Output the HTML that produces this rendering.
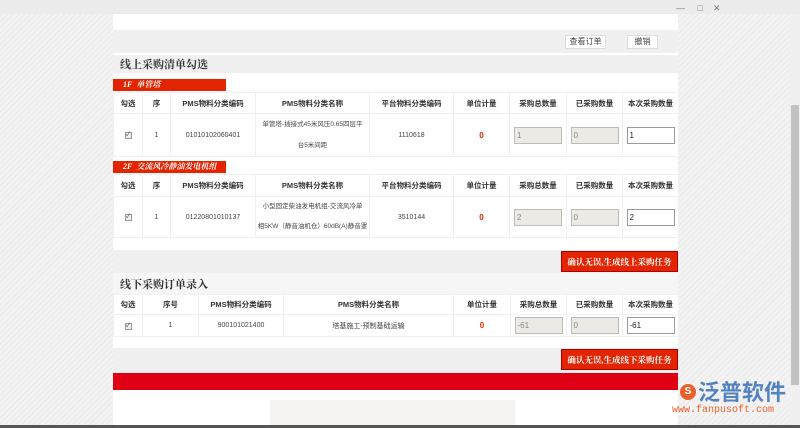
<!DOCTYPE html>
<html><head><meta charset="utf-8"><style>
*{margin:0;padding:0;box-sizing:border-box}
body{width:800px;height:428px;overflow:hidden;position:relative;font-family:"Liberation Serif","Noto Serif CJK SC",serif;font-size:8px;color:#333;
background:repeating-linear-gradient(135deg,#f3f3f3 0 3px,#e9e9e9 3px 4px)}
.a{position:absolute}
.topbar{left:0;top:0;width:800px;height:14px;background:#ececec}
.panel{left:113px;top:14px;width:565px;height:411px;background:#fff}
.gray{background:#f0f0f0}
.btn{background:#fff;border:1px solid #ddd;font-size:8px;text-align:center;line-height:12px;color:#444;font-family:"Liberation Sans","Noto Sans CJK SC",sans-serif}
.title{font-size:11px;font-weight:bold;color:#333}
.lbl{background:#e32400;color:#fff;font-style:italic;font-weight:bold;font-size:8px;line-height:12px;padding-left:10px}
table{position:absolute;left:113px;border-collapse:collapse;background:#fff;table-layout:fixed}
td{border:1px solid #f0f0f0;text-align:center;font-size:7px;color:#444;font-family:"Liberation Sans","Noto Sans CJK SC",sans-serif;overflow:hidden}
tr.h td{font-weight:bold;font-size:7.5px;color:#333}
.nm{white-space:nowrap;font-size:6.5px;line-height:21px}
.z{color:#e32400;font-weight:bold;font-size:8px}
.inp{display:inline-block;width:48px;height:17px;border:1px solid #bbb;background:#ebeae4;text-align:left;padding-left:2px;line-height:15px;font-size:8px;color:#888}
.inp.w{background:#fff;color:#222;border-color:#999}
.cb{display:inline-block;width:7px;height:7px;border:1px solid #999;background:#eee;font-size:6px;line-height:5px}
.rb{background:#e32400;color:#fff;font-weight:bold;font-size:8.5px;text-align:center;line-height:21px;border:1px solid #a00;font-family:"Liberation Serif","Noto Serif CJK SC",serif}
</style></head><body>
<div class="a topbar"></div>
<div class="a" style="left:676px;top:3px;font-size:9px;color:#777;font-family:'Liberation Sans',sans-serif">—&nbsp;&nbsp;&nbsp;&nbsp;&nbsp;□&nbsp;&nbsp;&nbsp;&nbsp;✕</div>
<div class="a" style="left:789px;top:14px;width:11px;height:411px;background:#f0f0f0"></div>
<div class="a" style="left:791px;top:105px;width:8px;height:280px;background:#c2c2c2"></div>
<div class="a panel"></div>
<div class="a gray" style="left:113px;top:30px;width:565px;height:23px"></div>
<div class="a btn" style="left:565px;top:35px;width:41px;height:14px">查看订单</div>
<div class="a btn" style="left:627px;top:35px;width:31px;height:14px">撤销</div>
<div class="a gray" style="left:113px;top:55px;width:565px;height:18px"></div>
<div class="a title" style="left:120px;top:56px">线上采购清单勾选</div>
<div class="a lbl" style="left:113px;top:79px;width:113px;height:12px">1F&nbsp; 单管塔</div>
<table style="top:92px;width:565px">
<colgroup><col style="width:29px"><col style="width:28px"><col style="width:85px"><col style="width:114px"><col style="width:84px"><col style="width:56px"><col style="width:57px"><col style="width:56px"><col style="width:56px"></colgroup>
<tr class="h" style="height:21px"><td>勾选</td><td>序</td><td>PMS物料分类编码</td><td>PMS物料分类名称</td><td>平台物料分类编码</td><td>单位计量</td><td>采购总数量</td><td>已采购数量</td><td>本次采购数量</td></tr>
<tr style="height:42px"><td><span class="cb">✓</span></td><td>1</td><td>01010102060401</td><td class="nm">单管塔-插接式45米风压0.65四层平<br>台5米间距</td><td>1110618</td><td class="z">0</td><td><span class="inp">1</span></td><td><span class="inp">0</span></td><td><span class="inp w">1</span></td></tr>
</table>
<div class="a lbl" style="left:113px;top:161px;width:113px;height:12px">2F&nbsp; 交流风冷静油发电机组</div>
<table style="top:174px;width:565px">
<colgroup><col style="width:29px"><col style="width:28px"><col style="width:85px"><col style="width:114px"><col style="width:84px"><col style="width:56px"><col style="width:57px"><col style="width:56px"><col style="width:56px"></colgroup>
<tr class="h" style="height:22px"><td>勾选</td><td>序</td><td>PMS物料分类编码</td><td>PMS物料分类名称</td><td>平台物料分类编码</td><td>单位计量</td><td>采购总数量</td><td>已采购数量</td><td>本次采购数量</td></tr>
<tr style="height:41px"><td><span class="cb">✓</span></td><td>1</td><td>01220801010137</td><td class="nm" style="line-height:20px">小型固定柴油发电机组-交流风冷单<br>相5KW（静音油机仓）60dB(A)静音罩</td><td>3510144</td><td class="z">0</td><td><span class="inp">2</span></td><td><span class="inp">0</span></td><td><span class="inp w">2</span></td></tr>
</table>
<div class="a gray" style="left:113px;top:250px;width:565px;height:23px"></div>
<div class="a rb" style="left:561px;top:251px;width:117px;height:21px">确认无误,生成线上采购任务</div>
<div class="a" style="left:113px;top:273px;width:565px;height:21px;background:#f6f6f6"></div>
<div class="a title" style="left:120px;top:276px">线下采购订单录入</div>
<table style="top:294px;width:565px">
<colgroup><col style="width:29px"><col style="width:56px"><col style="width:85px"><col style="width:170px"><col style="width:57px"><col style="width:56px"><col style="width:56px"><col style="width:56px"></colgroup>
<tr class="h" style="height:20px"><td>勾选</td><td>序号</td><td>PMS物料分类编码</td><td>PMS物料分类名称</td><td>单位计量</td><td>采购总数量</td><td>已采购数量</td><td>本次采购数量</td></tr>
<tr style="height:22px"><td><span class="cb">✓</span></td><td>1</td><td>900101021400</td><td>塔基施工-预制基础运输</td><td class="z">0</td><td><span class="inp">-61</span></td><td><span class="inp">0</span></td><td><span class="inp w">-61</span></td></tr>
</table>
<div class="a gray" style="left:113px;top:348px;width:565px;height:25px"></div>
<div class="a rb" style="left:561px;top:349px;width:117px;height:21px">确认无误,生成线下采购任务</div>
<div class="a" style="left:113px;top:373px;width:565px;height:17px;background:#e00016"></div>
<div class="a" style="left:270px;top:400px;width:245px;height:25px;background:#f7f2f2"></div>
<div class="a" style="left:0;top:425px;width:800px;height:3px;background:#555"></div>
<div class="a" style="left:680px;top:384px;width:16px;height:16px;border-radius:50%;background:#e8602a;color:#fff;font-size:10px;text-align:center;line-height:16px;font-weight:bold;font-family:'Liberation Sans',sans-serif">S</div>
<div class="a" style="left:698px;top:378px;font-size:22px;color:#3a6fb8;font-weight:bold;font-family:'Noto Sans CJK SC',sans-serif;line-height:26px;opacity:.85">泛普软件</div>
<div class="a" style="left:672px;top:405px;font-size:10px;color:#e8602a;font-family:'Liberation Mono',monospace">www.fanpusoft.com</div>
</body></html>
